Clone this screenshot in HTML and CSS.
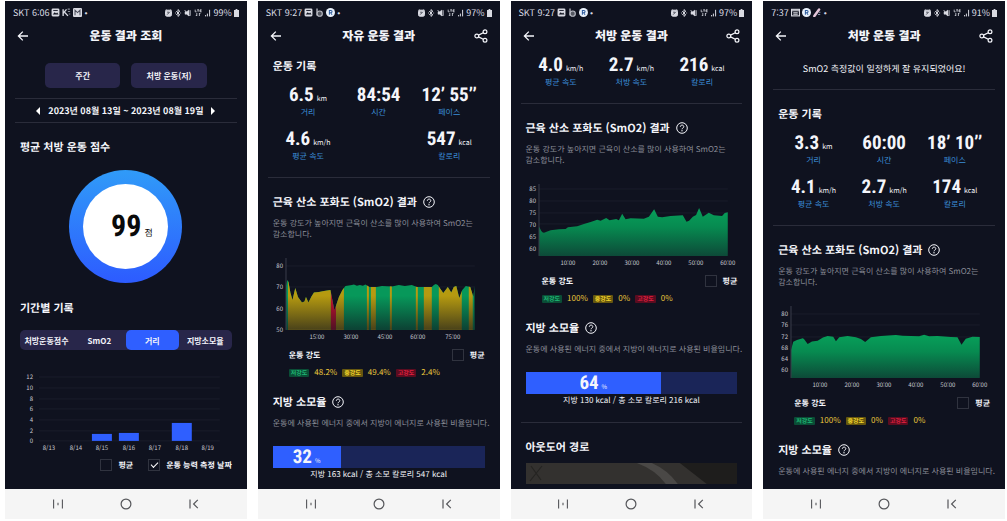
FILE: index.html
```html
<!DOCTYPE html>
<html lang="ko">
<head>
    <meta charset="UTF-8" />
    <meta name="viewport" content="width=device-width, initial-scale=1.0" />
    <title>운동 결과</title>
    <link rel="stylesheet" href="styles.css">
</head>
<body>
    <!-- Shared icons and gradients -->
    <svg class="sprite" width="0" height="0" aria-hidden="true">
        <defs>
            <linearGradient id="greenFill" x1="0" y1="0" x2="0" y2="1">
                <stop offset="0" stop-color="#07a05a" />
                <stop offset="0.4" stop-color="#078a50" />
                <stop offset="1" stop-color="#0d4a38" />
            </linearGradient>
            <linearGradient id="shade" x1="0" y1="0" x2="0" y2="1">
                <stop offset="0.4" stop-color="#0f121f" stop-opacity="0" />
                <stop offset="1" stop-color="#0f121f" stop-opacity="0.65" />
            </linearGradient>
        </defs>
        <symbol id="back" viewBox="0 0 12 12">
            <path d="M11 6H1.5M5.8 1.6L1.4 6l4.4 4.4" fill="none" stroke="currentColor" stroke-width="1.3" />
        </symbol>
        <symbol id="share" viewBox="0 0 14 14">
            <g fill="none" stroke="currentColor" stroke-width="1.2">
                <circle cx="11" cy="2.8" r="1.9" />
                <circle cx="2.8" cy="7" r="1.9" />
                <circle cx="11" cy="11.2" r="1.9" />
                <path d="M4.5 6.1l4.8-2.4M4.5 7.9l4.8 2.4" />
            </g>
        </symbol>
        <symbol id="help" viewBox="0 0 12 12">
            <g fill="none" stroke="currentColor">
                <circle cx="6" cy="6" r="5.3" />
                <path d="M4.3 4.8c0-2.3 3.5-2.3 3.5-.1 0 1.3-1.8 1.3-1.8 2.6" />
            </g>
            <circle cx="6" cy="8.8" r=".7" fill="currentColor" />
        </symbol>
        <symbol id="picture" viewBox="0 0 8 8">
            <rect x=".5" y=".5" width="7" height="7" rx="1.2" fill="currentColor" />
            <path d="M1.5 5.8l1.8-2 1.2 1.1 1-.8 1.2 1.7z" fill="#0f121f" />
            <path d="M2 2.2h4" stroke="#0f121f" stroke-width=".8" />
        </symbol>
        <symbol id="note" viewBox="0 0 8 8">
            <path d="M1 1v6M1.2 4.6L4 1.2M2.5 4l2.8 3" fill="none" stroke="currentColor" stroke-width="1.2" />
            <path d="M5 1h2M5.2 3.2h2M6 5.4h1.4" stroke="#8b8e99" stroke-width=".9" />
        </symbol>
        <symbol id="app" viewBox="0 0 8 8">
            <rect width="8" height="8" rx="1" fill="currentColor" />
            <path d="M1.8 6.4V2l2.2 2 2.2-2v4.4" fill="none" stroke="#4b4e5c" stroke-width=".9" />
        </symbol>
        <symbol id="band" viewBox="0 0 8 8">
            <path d="M1.8.5v6.2" stroke="#b9bbc4" stroke-width="1.2" />
            <circle cx="4.2" cy="5" r="2.3" fill="#555862" stroke="#b9bbc4" stroke-width="1" />
        </symbol>
        <symbol id="badge" viewBox="0 0 8 8">
            <circle cx="4" cy="4" r="4" fill="#e9f1fb" />
            <path d="M3 6V2.2h1.4a1 1 0 0 1 0 2H3M4.2 4.2L5.4 6" fill="none" stroke="#2c5a9c" stroke-width=".9" />
        </symbol>
        <symbol id="card" viewBox="0 0 8 8">
            <rect x=".5" y="1.2" width="7" height="5.8" fill="none" stroke="currentColor" />
            <path d="M.5 2.4h7M2 4.2h4M2 5.6h4" stroke="currentColor" />
        </symbol>
        <symbol id="run" viewBox="0 0 8 8">
            <path d="M1.2 7.2L5.4 1.4" stroke="#e4c6da" stroke-width="2.2" stroke-linecap="round" />
            <path d="M4.4 5.8h2M5.2 3.8h1.4" stroke="#8d93ab" />
        </symbol>
        <symbol id="tray" viewBox="0 0 38 8">
            <g fill="none" stroke="currentColor">
                <rect x=".5" y="1.2" width="6" height="6" rx="1.4" fill="currentColor" />
                <path d="M.3 1.4L1.6.4M6.7 1.4L5.4.4" stroke-width=".8" />
                <path d="M2.2 5.6l2.6-2.8M2.2 3.2h1.6" stroke="#3c3f4c" stroke-width=".9" />
                <path d="M11.2 2.2l3.6 3.6L13 7.4V.6l1.8 1.6-3.6 3.6M10 4h.8M15.3 4h.8" />
                <path d="M20 2.8h1.6L24 1v6l-2.4-1.8H20z" fill="currentColor" stroke-width=".5" />
                <path d="M25.2 1.2v5.6M19.6 1l5 6" stroke-width=".8" />
                <path d="M30.2.6v2.2h1.4M32.2.8H34M33.1.8v2M36.6.8H35v2h1.6M35 1.8h1.4M31.8 4v3l-1-1M34.4 7V4l1 1" stroke-width=".8" />
            </g>
        </symbol>
        <symbol id="signal" viewBox="0 0 6 8">
            <path d="M.6 7.4V6M2.4 7.4V4.6M4.6 7.4V.8" stroke="currentColor" stroke-width="1" />
        </symbol>
        <symbol id="battery" viewBox="0 0 5 8">
            <path d="M1.6 0h1.8v1H5v7H0V1h1.6z" fill="currentColor" />
        </symbol>
        <symbol id="recents" viewBox="0 0 12 12">
            <path d="M1.6 1.5v9M10.4 1.5v9M6 4.8v2.4" stroke="currentColor" stroke-width="1.1" />
        </symbol>
        <symbol id="home" viewBox="0 0 12 12">
            <circle cx="6" cy="6" r="4.9" fill="none" stroke="currentColor" stroke-width="1.2" />
        </symbol>
        <symbol id="prev" viewBox="0 0 12 12">
            <path d="M2 1.5v9M9.8 1.8L5.6 6l4.2 4.2" fill="none" stroke="currentColor" stroke-width="1.2" />
        </symbol>
    </svg>

    <main class="gallery">
        <!-- 운동 결과 조회 -->
        <article class="phone">
            <div class="screen">
                <div class="status">
                    <span>SKT 6:06</span>
                    <svg class="glyph"><use href="#picture" /></svg>
                    <svg class="glyph"><use href="#note" /></svg>
                    <svg class="glyph"><use href="#app" /></svg>
                    <span>•</span>
                    <svg class="tray"><use href="#tray" /></svg>
                    <svg class="signal"><use href="#signal" /></svg>
                    <span>99%</span>
                    <svg class="battery"><use href="#battery" /></svg>
                </div>
                <header class="topbar">
                    <button class="icon-btn" aria-label="뒤로"><svg class="icon"><use href="#back" /></svg></button>
                    <h1>운동 결과 조회</h1>
                </header>
                <div class="filters">
                    <button>주간</button>
                    <button>처방 운동(저)</button>
                </div>
                <div class="period">
                    <button aria-label="이전 주"><span class="arrow arrow-left"></span></button>
                    <span>2023년 08월 13일 ~ 2023년 08월 19일</span>
                    <button aria-label="다음 주"><span class="arrow arrow-right"></span></button>
                </div>
                <section class="section">
                    <h2>평균 처방 운동 점수</h2>
                    <div class="ring">
                        <div class="ring-inner"><b>99</b><span>점</span></div>
                    </div>
                    <h2>기간별 기록</h2>
                    <div class="tabs">
                        <button>처방운동점수</button>
                        <button>SmO2</button>
                        <button class="active">거리</button>
                        <button>지방소모율</button>
                    </div>
                    <svg class="bar-chart" viewBox="0 0 212 84">
                        <path class="grid" d="M19 8h181M19 19h181M19 30h181M19 40h181M19 51h181M19 62h181M19 72h181" />
                        <g class="bars">
                            <rect x="72" y="65" width="20" height="7" />
                            <rect x="99" y="64" width="20" height="8" />
                            <rect x="152" y="54" width="20" height="18" />
                        </g>
                        <g class="axis-y">
                            <text x="13" y="10">12</text>
                            <text x="13" y="21">10</text>
                            <text x="13" y="32">8</text>
                            <text x="13" y="42">6</text>
                            <text x="13" y="53">4</text>
                            <text x="13" y="64">2</text>
                            <text x="13" y="74">0</text>
                        </g>
                        <g class="axis-x">
                            <text x="29" y="81">8/13</text>
                            <text x="56" y="81">8/14</text>
                            <text x="82" y="81">8/15</text>
                            <text x="109" y="81">8/16</text>
                            <text x="135" y="81">8/17</text>
                            <text x="162" y="81">8/18</text>
                            <text x="188" y="81">8/19</text>
                        </g>
                    </svg>
                    <div class="checks">
                        <label class="check"><input type="checkbox">평균</label>
                        <label class="check"><input type="checkbox" checked>운동 능력 측정 날짜</label>
                    </div>
                </section>
            </div>
            <nav class="navbar">
                <button aria-label="최근 앱"><svg class="icon"><use href="#recents" /></svg></button>
                <button aria-label="홈"><svg class="icon"><use href="#home" /></svg></button>
                <button aria-label="뒤로"><svg class="icon"><use href="#prev" /></svg></button>
            </nav>
        </article>

        <!-- 자유 운동 결과 -->
        <article class="phone">
            <div class="screen">
                <div class="status">
                    <span>SKT 9:27</span>
                    <svg class="glyph"><use href="#picture" /></svg>
                    <svg class="glyph"><use href="#band" /></svg>
                    <svg class="glyph"><use href="#badge" /></svg>
                    <span>•</span>
                    <svg class="tray"><use href="#tray" /></svg>
                    <svg class="signal"><use href="#signal" /></svg>
                    <span>97%</span>
                    <svg class="battery"><use href="#battery" /></svg>
                </div>
                <header class="topbar">
                    <button class="icon-btn" aria-label="뒤로"><svg class="icon"><use href="#back" /></svg></button>
                    <h1>자유 운동 결과</h1>
                    <button class="icon-btn" aria-label="공유"><svg class="icon icon-share"><use href="#share" /></svg></button>
                </header>
                <section class="section section-first">
                    <h2>운동 기록</h2>
                    <dl class="stats">
                        <div><dd>6.5<small>km</small></dd><dt>거리</dt></div>
                        <div><dd>84:54</dd><dt>시간</dt></div>
                        <div><dd>12’ 55’’</dd><dt>페이스</dt></div>
                        <div><dd>4.6<small>km/h</small></dd><dt>평균 속도</dt></div>
                        <div class="last"><dd>547<small>kcal</small></dd><dt>칼로리</dt></div>
                    </dl>
                </section>
                <section class="section">
                    <h2>근육 산소 포화도 (SmO2) 결과 <svg class="help"><use href="#help" /></svg></h2>
                    <p class="desc">운동 강도가 높아지면 근육이 산소를 많이 사용하여 SmO2는<br>감소합니다.</p>
                    <svg class="area-chart" viewBox="0 0 212 90">
                        <clipPath id="freeRun">
                            <path d="M13 77V33L14.2 27L15.5 29L17.5 40L19.5 47L22.3 35L25 44L29 49.5L31.5 48.5L33 44L35.5 49.5L38.5 43.5L41 39.5L46 39L51 38L57.5 37L61.5 57.5L66 44L69.5 37L72.5 33L79 32L81 31.5L84 32.8L87 32L90 32.8L92.5 31.5L96.5 34L104 34L109 33L119 33.5L126 32L132 33L139 32L144 34L159 34L161 32L163 31L165 32L167 35L170.5 40L175 34L178.5 39.5L181 34L183.5 33L186.5 45L189.5 37L193 33L197.5 34L200.5 43.5L202 33V77z" />
                        </clipPath>
                        <path class="grid" d="M13 13h189M13 34h189M13 56h189" />
                        <g clip-path="url(#freeRun)">
                            <rect class="low" x="13" y="20" width="189" height="57" />
                            <path class="mid" d="M15 20h43v57h-43zM63 20h8v57h-8zM94 20h2v57h-2zM98 20h5v57h-5zM117 20h2v57h-2zM143 20h2v57h-2zM151 20h8v57h-8zM166 20h23v57h-23zM196 20h4v57h-4z" />
                            <rect class="high" x="58" y="20" width="5" height="57" />
                            <rect x="13" y="20" width="189" height="57" fill="url(#shade)" />
                        </g>
                        <path class="axis" d="M13 5v72" />
                        <g class="axis-y">
                            <text x="10" y="15">80</text>
                            <text x="10" y="36">70</text>
                            <text x="10" y="58">60</text>
                            <text x="10" y="79">50</text>
                        </g>
                        <g class="axis-x">
                            <text x="44" y="86">15:00</text>
                            <text x="78" y="86">30:00</text>
                            <text x="112" y="86">45:00</text>
                            <text x="145" y="86">60:00</text>
                            <text x="180" y="86">75:00</text>
                        </g>
                    </svg>
                    <div class="legend">
                        <strong>운동 강도</strong>
                        <label class="check"><input type="checkbox">평균</label>
                    </div>
                    <div class="levels">
                        <span class="tag tag-low">저강도</span><span>48.2%</span>
                        <span class="tag tag-mid">중강도</span><span>49.4%</span>
                        <span class="tag tag-high">고강도</span><span>2.4%</span>
                    </div>
                    <h2 class="next">지방 소모율 <svg class="help"><use href="#help" /></svg></h2>
                    <p class="desc">운동에 사용된 에너지 중에서 지방이 에너지로 사용된 비율입니다.</p>
                    <div class="fat-bar">
                        <div class="fat-fill" style="width: 32%"><b>32</b><small>%</small></div>
                    </div>
                    <p class="caption">지방 163 kcal / 총 소모 칼로리 547 kcal</p>
                </section>
            </div>
            <nav class="navbar">
                <button aria-label="최근 앱"><svg class="icon"><use href="#recents" /></svg></button>
                <button aria-label="홈"><svg class="icon"><use href="#home" /></svg></button>
                <button aria-label="뒤로"><svg class="icon"><use href="#prev" /></svg></button>
            </nav>
        </article>

        <!-- 처방 운동 결과 (아래로 스크롤) -->
        <article class="phone">
            <div class="screen">
                <div class="status">
                    <span>SKT 9:27</span>
                    <svg class="glyph"><use href="#picture" /></svg>
                    <svg class="glyph"><use href="#band" /></svg>
                    <svg class="glyph"><use href="#badge" /></svg>
                    <span>•</span>
                    <svg class="tray"><use href="#tray" /></svg>
                    <svg class="signal"><use href="#signal" /></svg>
                    <span>97%</span>
                    <svg class="battery"><use href="#battery" /></svg>
                </div>
                <header class="topbar">
                    <button class="icon-btn" aria-label="뒤로"><svg class="icon"><use href="#back" /></svg></button>
                    <h1>처방 운동 결과</h1>
                    <button class="icon-btn" aria-label="공유"><svg class="icon icon-share"><use href="#share" /></svg></button>
                </header>
                <section class="section section-scrolled">
                    <dl class="stats">
                        <div><dd>4.0<small>km/h</small></dd><dt>평균 속도</dt></div>
                        <div><dd>2.7<small>km/h</small></dd><dt>처방 속도</dt></div>
                        <div><dd>216<small>kcal</small></dd><dt>칼로리</dt></div>
                    </dl>
                </section>
                <section class="section">
                    <h2>근육 산소 포화도 (SmO2) 결과 <svg class="help"><use href="#help" /></svg></h2>
                    <p class="desc">운동 강도가 높아지면 근육이 산소를 많이 사용하여 SmO2는<br>감소합니다.</p>
                    <svg class="area-chart" viewBox="0 0 212 90">
                        <path class="grid" d="M13 10h189M13 22h189M13 34h189M13 45h189" />
                        <path fill="url(#greenFill)" d="M13 77V47.5L15.3 52Q17 55 20 53L24.7 51.3L33 50.3L39.7 50L42 48.3L51.3 47.3L58 45L64.7 43L71.3 40.7L74.7 41.7L80.3 39L83.7 41.3L90.3 40L93 41.3L96.3 34.7L99.7 40.3L104.7 39.3L118 39.7L123 37.7L128.3 30.3L132 37.7L136.3 38.3L144.7 37L157 36.3L160.7 42.7L163.3 41.7L167 37.7L170.3 36L173.3 29L177 37.7L183 33.7L188 36.3L196.3 37L199 34L202 33.3V77z" />
                        <path class="axis" d="M13 5v72" />
                        <g class="axis-y">
                            <text x="10" y="12">85</text>
                            <text x="10" y="24">80</text>
                            <text x="10" y="36">75</text>
                            <text x="10" y="48">70</text>
                            <text x="10" y="60">65</text>
                            <text x="10" y="72">60</text>
                        </g>
                        <g class="axis-x">
                            <text x="42" y="86">10:00</text>
                            <text x="74" y="86">20:00</text>
                            <text x="106" y="86">30:00</text>
                            <text x="138" y="86">40:00</text>
                            <text x="170" y="86">50:00</text>
                            <text x="202" y="86">60:00</text>
                        </g>
                    </svg>
                    <div class="legend">
                        <strong>운동 강도</strong>
                        <label class="check"><input type="checkbox">평균</label>
                    </div>
                    <div class="levels">
                        <span class="tag tag-low">저강도</span><span>100%</span>
                        <span class="tag tag-mid">중강도</span><span>0%</span>
                        <span class="tag tag-high">고강도</span><span>0%</span>
                    </div>
                    <h2 class="next">지방 소모율 <svg class="help"><use href="#help" /></svg></h2>
                    <p class="desc">운동에 사용된 에너지 중에서 지방이 에너지로 사용된 비율입니다.</p>
                    <div class="fat-bar">
                        <div class="fat-fill" style="width: 64%"><b>64</b><small>%</small></div>
                    </div>
                    <p class="caption">지방 130 kcal / 총 소모 칼로리 216 kcal</p>
                </section>
                <section class="section">
                    <h2>아웃도어 경로</h2>
                    <svg class="map" viewBox="0 0 212 21" preserveAspectRatio="none">
                        <rect width="212" height="21" fill="#33312f" />
                        <path d="M154 0h58v21h-31z" fill="#1e1d1c" />
                        <path d="M111 0h15q16 7 26 21h-12q-10-14-29-21z" fill="#4a4846" />
                        <path d="M4 18L16 3M5 3l10 14" stroke="#252422" stroke-width="1.2" />
                    </svg>
                </section>
            </div>
            <nav class="navbar">
                <button aria-label="최근 앱"><svg class="icon"><use href="#recents" /></svg></button>
                <button aria-label="홈"><svg class="icon"><use href="#home" /></svg></button>
                <button aria-label="뒤로"><svg class="icon"><use href="#prev" /></svg></button>
            </nav>
        </article>

        <!-- 처방 운동 결과 -->
        <article class="phone">
            <div class="screen">
                <div class="status">
                    <span>7:37</span>
                    <svg class="glyph"><use href="#card" /></svg>
                    <svg class="glyph"><use href="#badge" /></svg>
                    <svg class="glyph"><use href="#run" /></svg>
                    <span>•</span>
                    <svg class="tray"><use href="#tray" /></svg>
                    <svg class="signal"><use href="#signal" /></svg>
                    <span>91%</span>
                    <svg class="battery"><use href="#battery" /></svg>
                </div>
                <header class="topbar">
                    <button class="icon-btn" aria-label="뒤로"><svg class="icon"><use href="#back" /></svg></button>
                    <h1>처방 운동 결과</h1>
                    <button class="icon-btn" aria-label="공유"><svg class="icon icon-share"><use href="#share" /></svg></button>
                </header>
                <p class="message">SmO2 측정값이 일정하게 잘 유지되었어요!</p>
                <section class="section">
                    <h2>운동 기록</h2>
                    <dl class="stats">
                        <div><dd>3.3<small>km</small></dd><dt>거리</dt></div>
                        <div><dd>60:00</dd><dt>시간</dt></div>
                        <div><dd>18’ 10’’</dd><dt>페이스</dt></div>
                        <div><dd>4.1<small>km/h</small></dd><dt>평균 속도</dt></div>
                        <div><dd>2.7<small>km/h</small></dd><dt>처방 속도</dt></div>
                        <div><dd>174<small>kcal</small></dd><dt>칼로리</dt></div>
                    </dl>
                </section>
                <section class="section">
                    <h2>근육 산소 포화도 (SmO2) 결과 <svg class="help"><use href="#help" /></svg></h2>
                    <p class="desc">운동 강도가 높아지면 근육이 산소를 많이 사용하여 SmO2는<br>감소합니다.</p>
                    <svg class="area-chart" viewBox="0 0 212 90">
                        <path class="grid" d="M13 13h189M13 24h189M13 36h189" />
                        <path fill="url(#greenFill)" d="M13 77V49L15.3 40.7L19 39L24.7 37.3L26 38L29.7 43L34 40.5L39.7 39.7L45 36.5L49.7 35L55.3 35.7L58 40.3L61.3 36.3L69.7 35L78 36.3L83 38L87.3 41L93 36.3L103 35L118 34L124.7 34.7L141.3 35.3L146.3 33.7L151.3 35.3L159.7 35L173 36L179.7 36.3L183.7 43.7L188 37.7L194.7 35.7L202 36V77z" />
                        <path class="axis" d="M13 5v72" />
                        <g class="axis-y">
                            <text x="10" y="15">80</text>
                            <text x="10" y="26">76</text>
                            <text x="10" y="38">72</text>
                            <text x="10" y="49">68</text>
                            <text x="10" y="60">64</text>
                            <text x="10" y="71">60</text>
                        </g>
                        <g class="axis-x">
                            <text x="42" y="86">10:00</text>
                            <text x="74" y="86">20:00</text>
                            <text x="106" y="86">30:00</text>
                            <text x="138" y="86">40:00</text>
                            <text x="170" y="86">50:00</text>
                            <text x="202" y="86">60:00</text>
                        </g>
                    </svg>
                    <div class="legend">
                        <strong>운동 강도</strong>
                        <label class="check"><input type="checkbox">평균</label>
                    </div>
                    <div class="levels">
                        <span class="tag tag-low">저강도</span><span>100%</span>
                        <span class="tag tag-mid">중강도</span><span>0%</span>
                        <span class="tag tag-high">고강도</span><span>0%</span>
                    </div>
                    <h2 class="next">지방 소모율 <svg class="help"><use href="#help" /></svg></h2>
                    <p class="desc">운동에 사용된 에너지 중에서 지방이 에너지로 사용된 비율입니다.</p>
                </section>
            </div>
            <nav class="navbar">
                <button aria-label="최근 앱"><svg class="icon"><use href="#recents" /></svg></button>
                <button aria-label="홈"><svg class="icon"><use href="#home" /></svg></button>
                <button aria-label="뒤로"><svg class="icon"><use href="#prev" /></svg></button>
            </nav>
        </article>
    </main>
</body>
</html>
```
FILE: styles.css
```css
* {
    box-sizing: border-box;
}

body {
    margin: 0;
    background-color: #ffffff;
    color: #f4f5fa;
    font-family: 'Noto Sans CJK KR', 'Noto Sans', sans-serif;
    font-size: 8px;
    text-rendering: geometricPrecision;
}

h1, h2, p, dl, dd {
    margin: 0;
}

button {
    padding: 0;
    border: none;
    background: none;
    color: inherit;
    font: inherit;
    cursor: pointer;
}

svg {
    display: block;
}

.sprite {
    position: absolute;
}

/* Phones */
.gallery {
    display: grid;
    grid-template-columns: repeat(4, minmax(0, 1fr));
    gap: 11px;
    min-height: 100vh;
    padding: 1px 2px 2px 5px;
}

.phone {
    display: flex;
    flex-direction: column;
}

.screen {
    flex: 1;
    background-color: #0f121f;
}

.navbar {
    display: flex;
    justify-content: center;
    gap: 56px;
    height: 30px;
    background-color: #f5f5f5;
    color: #55565a;
}

.icon {
    width: 12px;
    height: 12px;
}

.icon-share {
    width: 14px;
    height: 14px;
}

/* Status bar and header */
.status {
    display: flex;
    align-items: center;
    gap: 2px;
    height: 23px;
    padding: 0 8px;
    color: #d9dae2;
    font-size: 9px;
    white-space: nowrap;
}

.glyph {
    width: 9px;
    height: 9px;
}

.tray {
    width: 38px;
    height: 8px;
    margin-left: auto;
}

.signal {
    width: 6px;
    height: 8px;
}

.battery {
    width: 5px;
    height: 8px;
}

.topbar {
    display: grid;
    grid-template-columns: 14px 1fr 14px;
    align-items: center;
    height: 24px;
    padding: 0 12px;
}

.topbar h1 {
    font-size: 12px;
    font-weight: 900;
    line-height: 24px;
    text-align: center;
}

/* History filters */
.filters {
    display: flex;
    justify-content: center;
    gap: 11px;
    padding: 15px 40px 10px;
}

.filters button {
    flex: 1;
    height: 25px;
    border-radius: 5px;
    background-color: #28264a;
    font-weight: bold;
}

.period {
    display: flex;
    justify-content: center;
    align-items: center;
    gap: 8px;
    height: 25px;
    margin: 0 10px;
    border-top: 1px solid #2a2c3a;
    border-bottom: 1px solid #2a2c3a;
    font-size: 9px;
    font-weight: bold;
    white-space: nowrap;
}

.arrow {
    display: block;
    border: 4px solid transparent;
}

.arrow-left {
    border-left-width: 0;
    border-right-color: #ffffff;
}

.arrow-right {
    border-right-width: 0;
    border-left-color: #ffffff;
}

/* Sections */
.section {
    margin: 0 10px;
    padding: 15px 5px 14px;
}

.section + .section {
    border-top: 1px solid #2a2c3a;
}

.section:last-child {
    padding-bottom: 4px;
}

.section-first {
    padding-top: 9px;
}

.section-scrolled {
    padding-top: 5px;
}

.section h2 {
    display: flex;
    align-items: center;
    gap: 6px;
    font-size: 11px;
    font-weight: bold;
    line-height: 18px;
    white-space: nowrap;
}

.section .next {
    margin-top: 14px;
}

.help {
    width: 12px;
    height: 12px;
}

.desc {
    margin-top: 7px;
    color: #8b8d98;
    line-height: 11px;
    white-space: nowrap;
}

.message {
    height: 42px;
    margin: 0 10px;
    border-bottom: 1px solid #2a2c3a;
    font-size: 9px;
    line-height: 42px;
    text-align: center;
}

/* Score ring */
.ring {
    width: 113px;
    height: 113px;
    margin: 14px auto 16px;
    padding: 14px;
    border-radius: 50%;
    background: linear-gradient(#309bf8, #2d5bff);
}

.ring-inner {
    display: flex;
    justify-content: center;
    align-items: baseline;
    gap: 3px;
    height: 100%;
    padding-left: 12px;
    border-radius: 50%;
    background-color: #ffffff;
    color: #0a0a0a;
    font-size: 9px;
    line-height: 85px;
}

.ring-inner b {
    font-family: 'Liberation Sans Narrow', 'Roboto Condensed', 'Liberation Sans', sans-serif;
    font-size: 30px;
}

/* Tabs */
.tabs {
    display: flex;
    height: 20px;
    margin: 13px 0 19px;
    border-radius: 5px;
    background-color: #28264a;
    font-weight: bold;
}

.tabs button {
    flex: 1 1 0;
    border-radius: 5px;
    white-space: nowrap;
}

.tabs .active {
    background-color: #2f5fff;
}

/* Charts */
.bar-chart,
.area-chart {
    width: 100%;
    height: auto;
}

.area-chart {
    margin-top: 13px;
}

.grid {
    stroke: #1a1d2b;
}

.axis {
    stroke: #3a3d4a;
}

.bars {
    fill: #2f5fff;
}

.low {
    fill: #07985a;
}

.mid {
    fill: #b59a10;
}

.high {
    fill: #c8102e;
}

.axis-y,
.axis-x {
    fill: #c9cad2;
    font-size: 6px;
}

.axis-y {
    text-anchor: end;
}

.axis-x {
    text-anchor: middle;
}

/* Check boxes */
.checks {
    display: flex;
    justify-content: flex-end;
    gap: 15px;
    margin-top: 6px;
}

.check {
    display: flex;
    align-items: center;
    gap: 6px;
    height: 13px;
    font-weight: bold;
}

.check input {
    appearance: none;
    display: grid;
    place-items: center;
    width: 12px;
    height: 12px;
    margin: 0;
    border: 1px solid #30333f;
}

.check input:checked::before {
    content: '';
    width: 6px;
    height: 3px;
    margin-bottom: 2px;
    border-left: 1px solid #ffffff;
    border-bottom: 1px solid #ffffff;
    transform: rotate(-45deg);
}

.legend {
    display: flex;
    justify-content: space-between;
    align-items: center;
    margin-top: 6px;
    padding-left: 16px;
}

.levels {
    display: flex;
    align-items: center;
    gap: 5px;
    height: 12px;
    margin-top: 5px;
    padding-left: 16px;
    color: #ecc93c;
}

.tag {
    padding: 0 2px;
    border-radius: 1px;
    font-size: 6px;
    font-weight: bold;
    line-height: 8px;
}

.tag-low {
    background-color: #0a4d36;
    color: #1fb573;
}

.tag-mid {
    background-color: #66570f;
    color: #f0d32c;
}

.tag-high {
    background-color: #5a0c20;
    color: #e0203f;
}

/* Workout numbers */
.stats {
    display: grid;
    grid-template-columns: repeat(3, 1fr);
    row-gap: 8px;
    text-align: center;
}

h2 + .stats {
    margin-top: 8px;
}

.stats div {
    display: flex;
    flex-direction: column;
}

.stats .last {
    grid-column: 3;
}

.stats dd {
    height: 24px;
    font-family: 'Liberation Sans Narrow', 'Roboto Condensed', 'Liberation Sans', sans-serif;
    font-size: 19px;
    font-weight: bold;
    line-height: 24px;
    white-space: nowrap;
}

.stats small {
    margin-left: 3px;
    font-family: 'Noto Sans CJK KR', sans-serif;
    font-size: 7px;
    font-weight: normal;
}

.stats dt {
    color: #3b8ed8;
    line-height: 12px;
}

/* Fat burn bar */
.fat-bar {
    height: 22px;
    margin-top: 17px;
    background-color: #1a2558;
}

.fat-fill {
    display: flex;
    justify-content: center;
    align-items: baseline;
    gap: 3px;
    height: 100%;
    background-color: #2f5fff;
    line-height: 22px;
}

.fat-fill b {
    font-family: 'Liberation Sans Narrow', 'Roboto Condensed', 'Liberation Sans', sans-serif;
    font-size: 19px;
}

.fat-fill small {
    font-size: 6px;
}

.caption {
    line-height: 14px;
    text-align: center;
}

/* Route map */
.map {
    width: 100%;
    height: 21px;
    margin-top: 7px;
}
```
